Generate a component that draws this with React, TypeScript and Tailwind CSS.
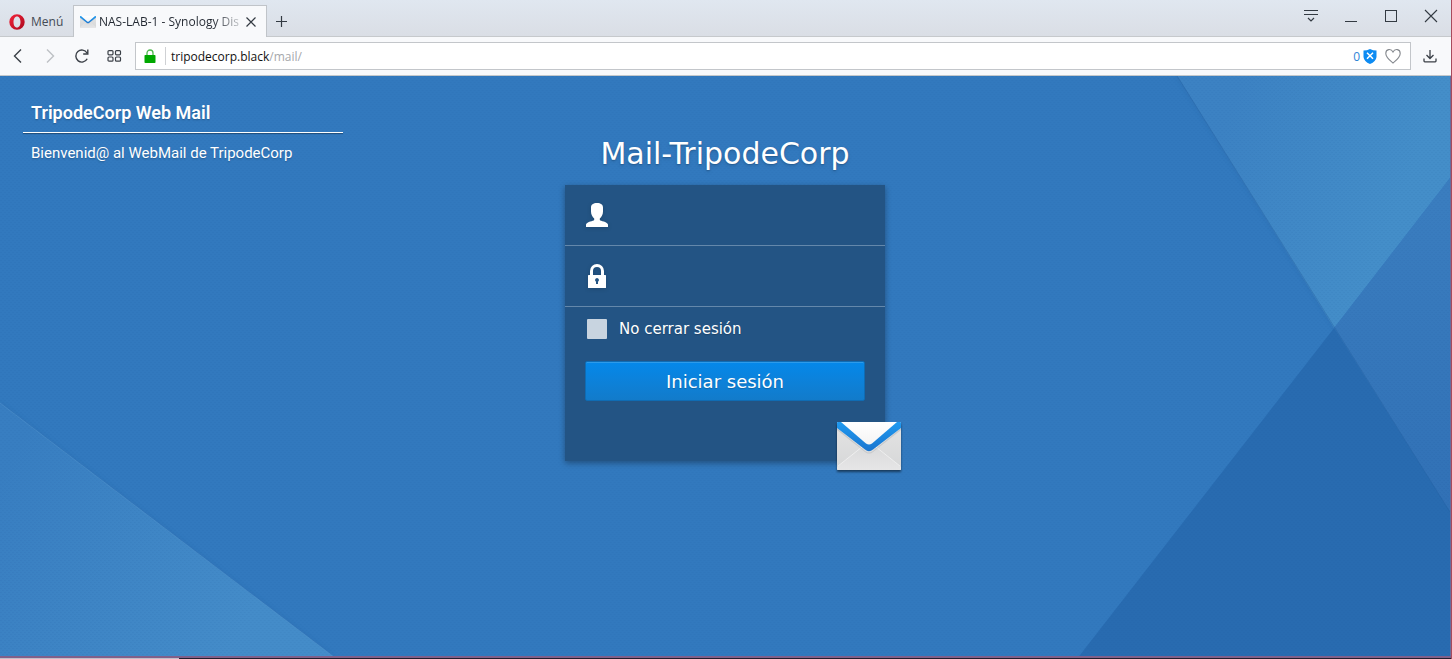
import type { ReactNode } from "react";

function IconButton({ label, className, children }: { label: string; className: string; children: ReactNode }) {
  return (
    <button type="button" aria-label={label} className={`flex shrink-0 items-center justify-center ${className}`}>
      {children}
    </button>
  );
}

function Envelope({ id, className }: { id: string; className: string }) {
  return (
    <svg viewBox="0 0 64 48" className={className} aria-hidden="true">
      <defs>
        <linearGradient id={`${id}-body`} x1="0" y1="0" x2="0" y2="1">
          <stop offset="0" stopColor="#e4e4e4" />
          <stop offset="1" stopColor="#d6d7d8" />
        </linearGradient>
        <linearGradient id={`${id}-flap`} x1="0" y1="0" x2="0" y2="1">
          <stop offset="0" stopColor="#ffffff" />
          <stop offset="1" stopColor="#f4f4f4" />
        </linearGradient>
        <linearGradient id={`${id}-lower`} x1="0" y1="0" x2="0" y2="1">
          <stop offset="0" stopColor="#d9dadb" />
          <stop offset="1" stopColor="#e6e6e7" />
        </linearGradient>
        <linearGradient id={`${id}-stripe`} x1="0" y1="0" x2="0" y2="1">
          <stop offset="0" stopColor="#1f9af0" />
          <stop offset="1" stopColor="#1a75cf" />
        </linearGradient>
        <clipPath id={`${id}-clip`}>
          <rect width="64" height="48" rx="1" />
        </clipPath>
      </defs>
      <g clipPath={`url(#${id}-clip)`}>
        <rect width="64" height="48" fill={`url(#${id}-body)`} />
        <path d="M0 45 L26 24 H38 L64 45 V48 H0Z" fill={`url(#${id}-lower)`} />
        <path d="M1 44 L25 25 M63 44 L39 25" stroke="#f3f3f3" strokeWidth="0.800" fill="none" />
        <path d="M0 6 L28 29 Q32 32 36 29 L64 6 V8 L36 30 Q32 33 28 30 L0 8Z" fill="#b9bbbd" opacity="0.6" />
        <path d="M0 0 H64 V6 L36 27.500 Q32 31 28 27.500 L0 6Z" fill={`url(#${id}-stripe)`} />
        <path d="M4 0 H60 L35 21.500 Q32 23.500 29 21.500Z" fill={`url(#${id}-flap)`} />
      </g>
    </svg>
  );
}

function TitleBar() {
  return (
    <div className="flex h-[37px] items-end border-b border-[#c6c9cc] bg-linear-to-b from-[#e0e7f0] to-[#dadee5]">
      <button type="button" className="flex h-[31px] w-[73px] shrink-0 items-center gap-[6px] pt-[2px] pl-[9px] text-[12px] text-[#444b55]">
        <svg viewBox="0 0 16 16" className="size-4" aria-hidden="true">
          <defs>
            <linearGradient id="opera" x1="0" y1="0" x2="1" y2="1">
              <stop offset="0" stopColor="#f5243b" />
              <stop offset="1" stopColor="#a9081c" />
            </linearGradient>
          </defs>
          <path
            fillRule="evenodd"
            fill="url(#opera)"
            d="M8 0.300A7.700 7.700 0 1 1 8 15.700A7.700 7.700 0 1 1 8 0.300ZM8 2.500C5.700 2.500 4.500 5 4.500 8S5.700 13.500 8 13.500S11.500 11 11.500 8S10.300 2.500 8 2.500Z"
          />
        </svg>
        Menú
      </button>
      <div className="-mb-px flex h-8 w-[194px] shrink-0 items-center border border-b-0 border-[#c0c4c9] bg-[#f8f9fb] pl-[6px]">
        <Envelope id="tab" className="h-3 w-4 shrink-0" />
        <span className="ml-[3px] w-[142px] bg-linear-to-r from-[#222831] from-80% to-[#222831]/20 bg-clip-text text-[12px] whitespace-nowrap text-transparent">
          NAS-LAB-1 - Synology Dis
        </span>
        <IconButton label="Cerrar pestaña" className="ml-[2px] size-4 text-[#333a42]">
          <svg viewBox="0 0 16 16" className="size-4" stroke="currentColor" strokeWidth="1.2" aria-hidden="true">
            <path d="M3.500 3.500l9 9M12.500 3.500l-9 9" />
          </svg>
        </IconButton>
      </div>
      <IconButton label="Nueva pestaña" className="h-[31px] w-7 text-[#333a42]">
        <svg viewBox="0 0 16 16" className="size-4" stroke="currentColor" strokeWidth="1.2" aria-hidden="true">
          <path d="M8.500 3v11M3 8.500h11" />
        </svg>
      </IconButton>
      <div className="ml-auto flex h-full items-start text-[#333a42]">
        <IconButton label="Menú de pestañas" className="h-8 w-10">
          <svg viewBox="0 0 16 16" className="size-4" fill="none" stroke="currentColor" strokeWidth="1.2" aria-hidden="true">
            <path d="M1 2.500h14M1 6.500h14M5 10l3 3 3-3" />
          </svg>
        </IconButton>
        <IconButton label="Minimizar" className="h-8 w-10">
          <svg viewBox="0 0 16 16" className="size-4" stroke="currentColor" aria-hidden="true">
            <path d="M2 13.500h12" />
          </svg>
        </IconButton>
        <IconButton label="Maximizar" className="h-8 w-10">
          <svg viewBox="0 0 16 16" className="size-4" fill="none" stroke="currentColor" aria-hidden="true">
            <rect x="2.500" y="2.500" width="11" height="11" />
          </svg>
        </IconButton>
        <IconButton label="Cerrar" className="h-8 w-10">
          <svg viewBox="0 0 16 16" className="size-4" stroke="currentColor" strokeWidth="1.1" aria-hidden="true">
            <path d="M2 2l12 12M14 2L2 14" />
          </svg>
        </IconButton>
      </div>
    </div>
  );
}

function Toolbar() {
  return (
    <div className="flex h-[39px] items-center border-b border-[#c3c8cc] bg-[#f8f9fb] text-[#3a3f46]">
      <div className="flex w-[135px] shrink-0 items-center pl-[2px]">
        <IconButton label="Atrás" className="size-8">
          <svg viewBox="0 0 16 16" className="size-4" fill="none" stroke="currentColor" strokeWidth="1.4" aria-hidden="true">
            <path d="M11 1.500L4.500 8l6.500 6.500" />
          </svg>
        </IconButton>
        <IconButton label="Adelante" className="size-8 text-[#bdc0c4]">
          <svg viewBox="0 0 16 16" className="size-4" fill="none" stroke="currentColor" strokeWidth="1.4" aria-hidden="true">
            <path d="M5 1.500L11.500 8L5 14.500" />
          </svg>
        </IconButton>
        <IconButton label="Recargar" className="size-8">
          <svg viewBox="0 0 16 16" className="size-4" fill="none" stroke="currentColor" strokeWidth="1.4" aria-hidden="true">
            <path d="M13.200 10.800A6 6 0 1 1 13 5M13.800 1.500V6H9.200" />
          </svg>
        </IconButton>
        <IconButton label="Acceso rápido" className="size-8">
          <svg viewBox="0 0 16 16" className="size-4" fill="none" stroke="currentColor" strokeWidth="1.2" aria-hidden="true">
            <rect x="2" y="2.600" width="5" height="4.200" rx="1" />
            <rect x="9.500" y="2.600" width="5" height="4.200" rx="1" />
            <rect x="2" y="9" width="5" height="4.200" rx="1" />
            <rect x="9.500" y="9" width="5" height="4.200" rx="1" />
          </svg>
        </IconButton>
      </div>
      <div className="flex h-7 flex-1 items-center border border-[#c3c6ca] bg-white">
        <svg viewBox="0 0 12 15" className="ml-[8px] h-[15px] w-3 shrink-0" aria-hidden="true">
          <path d="M3 7V4a3 3 0 0 1 6 0V7" fill="none" stroke="#4db84d" strokeWidth="1.300" />
          <rect x="0.500" y="6" width="11" height="8" rx="0.800" fill="#00a800" />
        </svg>
        <span className="ml-[9px] h-[18px] w-px bg-[#cfd1d4]" />
        <a href="#mail" className="ml-[5px] flex-1 pt-px text-[12px] text-[#111]">
          tripodecorp.black<span className="text-[#a6a8ab]">/mail/</span>
        </a>
        <span className="mr-[3px] pt-px text-[12px] text-[#2e84d6]">0</span>
        <svg viewBox="0 0 14 15" className="h-[15px] w-[14px] shrink-0" aria-hidden="true">
          <path d="M0.500 1.500Q4 1.500 7 0Q10 1.500 13.500 1.500V8Q13 12.500 7 15Q1 12.500 0.500 8Z" fill="#0d8bf2" />
          <path d="M4 3.800l6 6M10 3.800l-6 6" stroke="#fff" strokeWidth="1.500" />
        </svg>
        <IconButton label="Guardar en favoritos" className="mr-[9px] ml-[8px] size-4 text-[#85898e]">
          <svg viewBox="0 0 16 16" className="size-4" fill="none" stroke="currentColor" strokeWidth="1.100" aria-hidden="true">
            <path d="M8 15C4.500 12 0.800 9.300 0.800 5.400C0.800 1 6 0.200 8 4C10 0.200 15.200 1 15.200 5.400C15.200 9.300 11.500 12 8 15Z" />
          </svg>
        </IconButton>
      </div>
      <IconButton label="Descargas" className="h-8 w-10 pr-[3px]">
        <svg viewBox="0 0 16 16" className="size-4" fill="none" stroke="currentColor" strokeWidth="1.300" aria-hidden="true">
          <path d="M8 2v8.500M4.500 7L8 10.500L11.500 7M2 10.500V13Q2 13.800 2.800 13.800H13.200Q14 13.800 14 13V10.500" />
        </svg>
      </IconButton>
    </div>
  );
}

function Backdrop() {
  return (
    <svg viewBox="0 0 1451 580" preserveAspectRatio="none" className="absolute inset-0 size-full" aria-hidden="true">
      <defs>
        <linearGradient id="lit-right" gradientUnits="userSpaceOnUse" x1="1220" y1="60" x2="1400" y2="130">
          <stop offset="0" stopColor="#3c82c3" />
          <stop offset="1" stopColor="#448ec9" />
        </linearGradient>
        <linearGradient id="side" gradientUnits="userSpaceOnUse" x1="1420" y1="130" x2="1420" y2="430">
          <stop offset="0" stopColor="#3a7dbf" />
          <stop offset="1" stopColor="#3171b6" />
        </linearGradient>
        <linearGradient id="lit-left" gradientUnits="userSpaceOnUse" x1="0" y1="400" x2="250" y2="540">
          <stop offset="0" stopColor="#387ec1" />
          <stop offset="1" stopColor="#448cc9" />
        </linearGradient>
        <pattern id="weave" width="4" height="4" patternUnits="userSpaceOnUse">
          <rect x="0" y="0" width="2" height="1" fill="#0c3e80" opacity="0.060" />
          <rect x="2" y="2" width="2" height="1" fill="#0c3e80" opacity="0.060" />
        </pattern>
        <filter id="soft" x="-10%" y="-10%" width="120%" height="120%">
          <feGaussianBlur stdDeviation="2" />
        </filter>
      </defs>
      <rect width="1451" height="580" fill="#3279be" />
      <path d="M1178 0L1451 436M0 327L333 580" stroke="#1d5493" strokeWidth="2" opacity="0.250" filter="url(#soft)" />
      <path d="M1178 0H1451V102L1335 252Z" fill="url(#lit-right)" />
      <path d="M1451 102L1335 252L1451 436Z" fill="url(#side)" />
      <path d="M1335 252L1451 436V580H1080Z" fill="#286bb0" />
      <path d="M0 327L333 580H0Z" fill="url(#lit-left)" />
      <path d="M0 327L333 580" stroke="#5b9bd0" strokeWidth="1" opacity="0.400" />
      <path d="M1178 0L1451 436" stroke="#235e9f" strokeWidth="1" opacity="0.400" />
      <rect width="1451" height="580" fill="url(#weave)" />
    </svg>
  );
}

function LoginCard() {
  return (
    <form
      className="relative flex h-[276px] flex-col bg-[#235484] shadow-[0_2px_6px_rgba(0,0,0,0.35)]"
      onSubmit={(event) => event.preventDefault()}
    >
      <label className="flex h-[61px] items-center border-b border-[#6488ab] pl-5">
        <svg viewBox="0 0 24 24" className="size-6 drop-shadow-sm" fill="#fff" aria-hidden="true">
          <path d="M12 0C15.800 0 18 1.500 18 4.500V8.500C18 11.500 16.500 14 14.800 15.500V17C15.500 18.200 22 18.500 23 21.500V24H1V21.500C2 18.500 8.500 18.200 9.200 17V15.500C7.500 14 6 11.500 6 8.500V4.500C6 1.500 8.200 0 12 0Z" />
        </svg>
        <input type="text" aria-label="Nombre de usuario" className="ml-3 h-10 w-56 bg-transparent text-base text-white outline-none" />
      </label>
      <label className="flex h-[61px] items-center border-b border-[#6488ab] pl-5">
        <svg viewBox="0 0 24 24" className="size-6 drop-shadow-sm" aria-hidden="true">
          <path d="M6.500 12V7a5.500 5.500 0 0 1 11 0V12" fill="none" stroke="#fff" strokeWidth="3" />
          <rect x="3" y="11" width="18" height="13" rx="0.500" fill="#fff" />
          <path d="M12 14a2 2 0 0 1 1 3.700V20H11V17.700A2 2 0 0 1 12 14Z" fill="#235484" />
        </svg>
        <input type="password" aria-label="Contraseña" className="ml-3 h-10 w-56 bg-transparent text-base text-white outline-none" />
      </label>
      <label className="mt-3 ml-[22px] flex h-5 items-center gap-3 self-start text-[15px] text-white text-shadow-xs">
        <input type="checkbox" className="size-5 appearance-none rounded-[1px] bg-[#c8d4e0]" />
        <span className="pt-px">No cerrar sesión</span>
      </label>
      <button
        type="submit"
        className="mx-5 mt-[22px] h-10 rounded-[2px] border border-[#0f6cb4] bg-linear-to-b from-[#0488ea] to-[#127bca] text-[18px] text-white inset-shadow-[0_1px_0_#2d9bea] text-shadow-xs"
      >
        Iniciar sesión
      </button>
      <Envelope id="badge" className="absolute -right-4 -bottom-[9px] h-12 w-16 drop-shadow-[0_2px_1px_rgba(0,0,0,0.5)]" />
    </form>
  );
}

export default function App() {
  return (
    <div className="flex min-h-screen flex-col border-r border-[#a94a5c] bg-[#3279be] font-['Open_Sans','Noto_Sans',sans-serif]">
      <TitleBar />
      <Toolbar />
      <main className="relative flex-1 overflow-hidden border-r border-[#6a6d9d]">
        <Backdrop />
        <div className="relative grid grid-cols-[1fr_320px_1fr] text-white">
          <section className="mt-[21px] ml-[23px] w-80 font-[Roboto,sans-serif]">
            <h1 className="px-2 pb-[3px] text-[18px] leading-8 font-semibold text-shadow-sm">TripodeCorp Web Mail</h1>
            <hr className="border-white shadow-[0_1px_1px_rgba(0,0,0,0.4)]" />
            <p className="px-2 pt-[10px] text-[15px] leading-5 text-shadow-sm">Bienvenid@ al WebMail de TripodeCorp</p>
          </section>
          <section className="pt-[58px] font-[Verdana,'DejaVu_Sans',sans-serif]">
            <h2 className="pb-[11px] text-center text-[30px] leading-10 text-shadow-md">Mail-TripodeCorp</h2>
            <LoginCard />
          </section>
        </div>
      </main>
      <footer className="border-t-2 border-[#80608a]">
        <div className="h-px bg-[#221f2e]">
          <div className="h-px w-[179px] bg-[#c2bfca]" />
        </div>
      </footer>
    </div>
  );
}
